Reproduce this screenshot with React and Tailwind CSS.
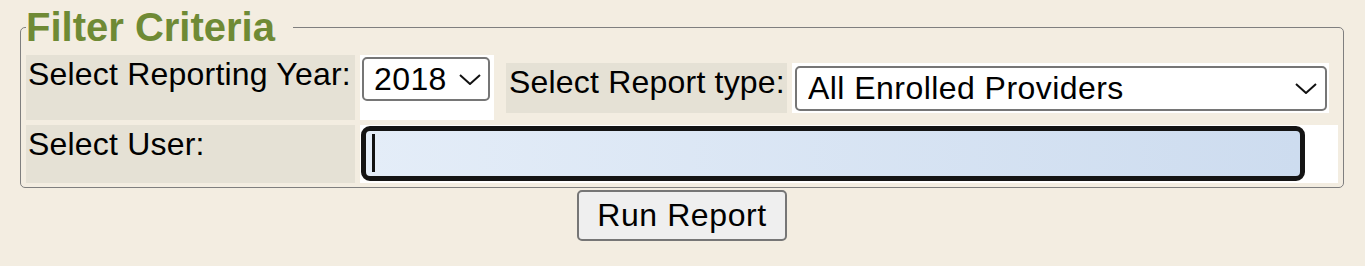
import React from 'react'

const Chevron = ({ className }) => (
  <svg className={className} width="22" height="11" viewBox="0 0 22 11" fill="none">
    <polyline points="1,1 11,10 21,1" stroke="#111" strokeWidth="2" strokeLinejoin="miter" />
  </svg>
)

const App = () => {
  return (
    <div className="min-h-screen bg-[#f3ede1] pt-[7px] pl-[20px] pr-[21px] font-['Liberation_Sans',Arial,sans-serif] text-black">
      {/* Filter box */}
      <fieldset className="border border-[#7f7f7f] rounded-[5px] px-[5px] pb-[4px]">
        <legend className="pr-[18px] text-[40px] leading-[40px] font-bold text-[#6f8a35]">
          Filter Criteria
        </legend>

        <div className="mt-[8px] flex flex-col gap-[5px] text-[32px] leading-[1.15] tracking-[0.2px]">
          {/* Year + report type */}
          <div className="flex gap-[5px] h-[65px]">
            <div className="w-[329px] shrink-0 bg-[#e5e1d5] pl-[2px] pt-[1px] whitespace-nowrap">Select Reporting Year:</div>
            <div className="w-[134px] shrink-0 bg-white p-[2px]">
              <div className="relative w-[128px] h-[44px]">
                <select
                  defaultValue="2018"
                  className="appearance-none w-full h-full bg-white border-2 border-[#767676] rounded-[5px] pl-[10px] text-[32px] leading-[1.15] tracking-[0.4px] outline-none"
                >
                  <option>2018</option>
                  <option>2017</option>
                  <option>2016</option>
                </select>
                <Chevron className="absolute right-[9px] top-[17px] pointer-events-none" />
              </div>
            </div>
            <div className="flex-1 flex items-center pl-[7px] pr-[9px]">
              <div className="flex gap-[5px] w-full h-[50px]">
                <div className="w-[281px] shrink-0 bg-[#e5e1d5] pl-[3px] pt-[1px] whitespace-nowrap">Select Report type:</div>
                <div className="flex-1 bg-white pl-[3px] pr-[2px] pt-[3px]">
                  <div className="relative h-[45px]">
                    <select
                      defaultValue="all"
                      className="appearance-none w-full h-full bg-white border-2 border-[#767676] rounded-[5px] pl-[11px] text-[32px] leading-[1.15] tracking-[0.45px] outline-none"
                    >
                      <option value="all">All Enrolled Providers</option>
                      <option value="active">Active Providers</option>
                    </select>
                    <Chevron className="absolute right-[10px] top-[17px] pointer-events-none" />
                  </div>
                </div>
              </div>
            </div>
          </div>

          {/* User */}
          <div className="flex gap-[5px] h-[58px]">
            <div className="w-[329px] shrink-0 bg-[#e5e1d5] pl-[2px] pt-[1px]">Select User:</div>
            <div className="flex-1 bg-white pl-[1px] pt-[1px]">
              <div className="relative w-[944px] h-[55px]">
                <input
                  type="text"
                  className="w-full h-full border-[5px] border-[#141414] rounded-[9px] bg-gradient-to-r from-[#e4edf8] to-[#cddcef] px-[10px] text-[32px] outline-none"
                />
                <span className="absolute left-[11px] top-[8px] w-[3px] h-[38px] bg-[#111] pointer-events-none" />
              </div>
            </div>
          </div>
        </div>
      </fieldset>

      <button
        type="button"
        className="block mx-auto mt-[2px] w-[210px] h-[51px] bg-[#efefef] border-2 border-[#767676] rounded-[5px] text-[32px] leading-[1.15] tracking-[0.6px]"
      >
        Run Report
      </button>
    </div>
  )
}

export default App
